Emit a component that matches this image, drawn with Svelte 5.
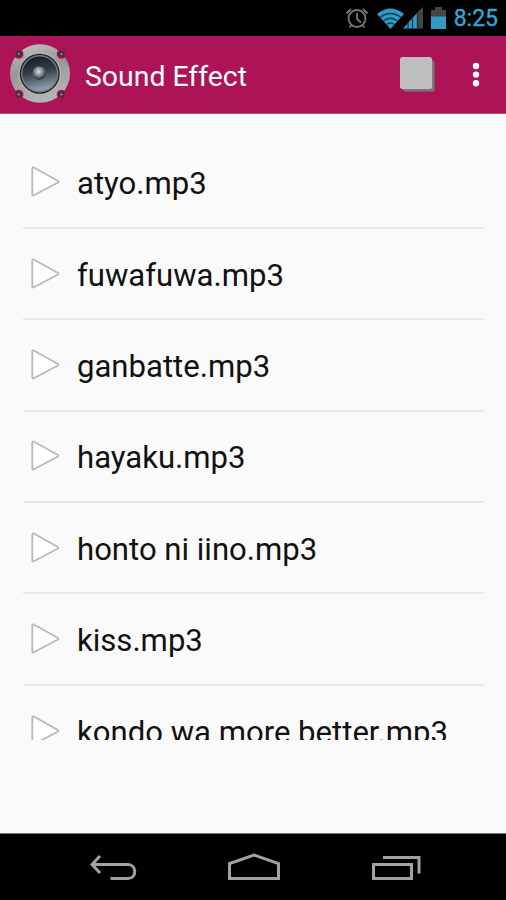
<script lang="ts">
  const title = "Sound Effect";
  const clock = "8:25";

  const sounds = [
    "atyo.mp3",
    "fuwafuwa.mp3",
    "ganbatte.mp3",
    "hayaku.mp3",
    "honto ni iino.mp3",
    "kiss.mp3",
    "kondo wa more better.mp3",
  ];

  const screws = [
    [8.7, 11],
    [51.5, 11],
    [8.7, 51.5],
    [51.5, 51.5],
  ];
</script>

<div class="screen">
  <div class="status-bar">
    <svg class="alarm" width="24" height="24" viewBox="0 0 24 24">
      <circle cx="12" cy="12.5" r="8.5" />
      <path d="M12 7v6l4 3.5M1.5 7.5 6 3M22.5 7.5 18 3M6 19.5 4.5 21.5M18 19.5l1.5 2" />
    </svg>
    <svg class="signals" width="46" height="24" viewBox="0 0 46 24">
      <path class="on" d="M0 8Q13.5-3 27 8L13.5 23Z" />
      <path class="waves" d="M3 11.5q10.5-8 21 0M6.5 15q7-5.5 14 0M9.5 18.5q4-3 8 0" />
      <path class="off" d="M40 6.5 46 1v21.5h-6Z" />
      <path class="on" d="M26 22.5 40 7v15.5Z" />
      <path class="bars" d="M31 16v7M35.5 11v12M40.5 6v17" />
    </svg>
    <svg class="battery" width="15" height="22" viewBox="0 0 15 22">
      <path class="off" d="M4 0h7v3h4v7H0V3h4Z" />
      <path class="on" d="M0 9.5h15V22H0Z" />
    </svg>
    <span class="clock">{clock}</span>
  </div>

  <header class="action-bar">
    <svg class="logo" width="60" height="60" viewBox="0 0 60 60">
      <defs>
        <linearGradient id="rim" x1="0" y1="0" x2="0.3" y2="1">
          <stop offset="0" stop-color="#c6c6c6" />
          <stop offset="0.5" stop-color="#969696" />
          <stop offset="1" stop-color="#b4b4b4" />
        </linearGradient>
        <linearGradient id="cone" x1="0" y1="0" x2="0.2" y2="1">
          <stop offset="0" stop-color="#16191d" />
          <stop offset="0.5" stop-color="#303c46" />
          <stop offset="1" stop-color="#8c9ba8" />
        </linearGradient>
        <radialGradient id="dome" cx="0.45" cy="0.4" r="0.6">
          <stop offset="0" stop-color="#e0e0e0" />
          <stop offset="0.5" stop-color="#85898c" />
          <stop offset="1" stop-color="#24282c" />
        </radialGradient>
      </defs>
      <ellipse cx="30" cy="30.5" rx="30" ry="29.3" fill="url(#rim)" />
      {#each screws as [x, y]}
        <circle cx={x} cy={y} r="4.8" fill="#ad1457" />
        <circle cx={x} cy={y} r="3.2" fill="#41303a" />
        <circle cx={x} cy={y} r="1.2" fill="#8a8488" />
      {/each}
      <circle cx="29.7" cy="30.7" r="21.5" fill="#b2b2b2" />
      <circle cx="29.7" cy="30.7" r="20" fill="#202326" />
      <circle cx="29.7" cy="30.7" r="18.7" fill="#777d80" />
      <circle cx="29.7" cy="30.7" r="17.3" fill="url(#cone)" />
      <circle cx="29.3" cy="30" r="6.8" fill="url(#dome)" />
    </svg>
    <h1>{title}</h1>
    <button class="stop" aria-label="Stop">
      <svg width="36" height="36" viewBox="0 0 36 36">
        <path d="M0.8 31 31 1l3.5 4v28q0 1.5-1.500 1.500H5Z" fill="#79777a" />
        <rect width="32" height="32" rx="2.5" fill="#bfbfbf" />
      </svg>
    </button>
    <button class="overflow" aria-label="More options">
      <svg width="8" height="26" viewBox="0 0 8 26">
        <circle cx="4" cy="4" r="3.2" />
        <circle cx="4" cy="12.6" r="3.2" />
        <circle cx="4" cy="21.2" r="3.2" />
      </svg>
    </button>
  </header>

  <main>
    <ul class="sounds">
      {#each sounds as sound}
        <li class="sound">
          <svg width="30" height="32" viewBox="0 0 30 32">
            <path d="M2.3 2.5v26q0 1.5 1.5 .8L28 16.5q1-.8 0-1.6L3.8 1.5Q2.3 .8 2.3 2.5Z" />
          </svg>
          <span>{sound}</span>
        </li>
      {/each}
    </ul>
  </main>

  <nav>
    <button aria-label="Back">
      <svg width="48" height="30" viewBox="0 0 48 30">
        <path d="M11 4 3 12.5 11 21M3 12.5h36c9 0 9 14 0 14H21.5" />
      </svg>
    </button>
    <button aria-label="Home">
      <svg width="54" height="30" viewBox="0 0 54 30">
        <path d="M2.5 26.5V11.5L27 3l24.500 8.500v15Z" />
      </svg>
    </button>
    <button aria-label="Recent apps">
      <svg width="50" height="30" viewBox="0 0 50 30">
        <path d="M2.5 12.5h38v14h-38ZM12 5.5h36v16" />
      </svg>
    </button>
  </nav>
</div>

<style>
  :global(body) {
    background: #000;
  }

  .screen {
    display: flex;
    flex-direction: column;
    width: 506px;
    height: 900px;
    overflow: hidden;
    background: #fafafa;
    font-family: Roboto, "Noto Sans", sans-serif;
  }

  button {
    display: flex;
    padding: 0;
    border: 0;
    background: none;
  }

  svg {
    display: block;
    flex: none;
  }

  .status-bar {
    display: flex;
    align-items: center;
    justify-content: flex-end;
    flex: none;
    height: 36px;
    padding-right: 8px;
    box-sizing: border-box;
    background: #000;
  }

  .on {
    fill: #329bc5;
  }

  .off {
    fill: #484541;
  }

  .alarm {
    margin-right: 8px;
    fill: none;
    stroke: #777;
    stroke-width: 1.8;
  }

  .signals {
    margin-right: 8px;
  }

  .waves,
  .bars {
    fill: none;
    stroke: #10384a;
    stroke-width: 1.3;
  }

  .battery {
    margin-right: 8px;
  }

  .clock {
    padding-top: 2px;
    color: #35a8d8;
    font-size: 23px;
    line-height: 34px;
    -webkit-text-stroke: 0.3px #35a8d8;
  }

  .action-bar {
    display: flex;
    align-items: center;
    flex: none;
    height: 78px;
    padding: 0 26px 0 10px;
    box-sizing: border-box;
    border-bottom: 1px solid #c64b80;
    background: #ad1457;
  }

  .logo {
    margin-bottom: 3px;
  }

  h1 {
    flex: 1;
    margin: 4px 0 0 15px;
    color: #fff;
    font-size: 28.4px;
    font-weight: 400;
    line-height: 36px;
  }

  .stop {
    margin-right: 36px;
  }

  .overflow {
    padding-top: 1px;
    fill: #fff;
  }

  main {
    flex: 1;
    padding: 23.5px 22px 0 23px;
  }

  .sounds {
    height: 602.5px;
    margin: 0;
    padding: 0;
    overflow: hidden;
    list-style: none;
  }

  .sound {
    display: flex;
    align-items: center;
    height: 91.4px;
    padding: 0 0 0 7px;
    box-sizing: border-box;
    border-bottom: 2px solid #e9e9e9;
    color: #111;
    font-size: 31.1px;
    white-space: nowrap;

    svg {
      margin-right: 17px;
      fill: #fff;
      stroke: #b9b9b9;
      stroke-width: 1.8;
    }

    span {
      padding-top: 3px;
    }
  }

  nav {
    display: flex;
    align-items: center;
    justify-content: center;
    gap: 90px;
    flex: none;
    height: 67px;
    padding: 0 0 0 3px;
    box-sizing: border-box;
    border-top: 1px solid #777;
    background: #000;

    svg {
      fill: none;
      stroke: #a2a2a2;
      stroke-width: 3;
    }
  }
</style>
